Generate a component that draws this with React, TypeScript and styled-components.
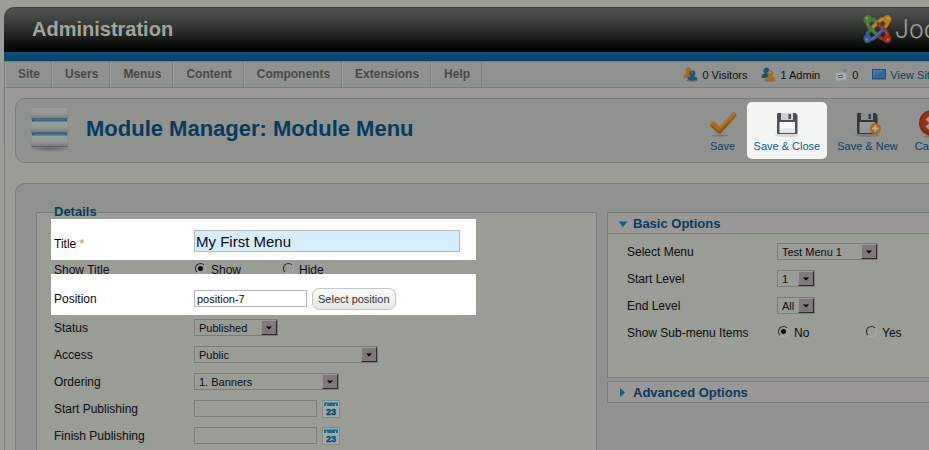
import React from "react";
import styled, { createGlobalStyle, css } from "styled-components";

const c = {
  page: "#9a9c96",
  card: "#90928f",
  strip: "#999896",
  line: "#7a7c7a",
  link: "#073f68",
  heading: "#053b5f",
  text: "#0b0b0d",
};

const GlobalStyle = createGlobalStyle`
  *, *::before, *::after { box-sizing: border-box; }
  body {
    margin: 0;
    background: ${c.page};
    color: ${c.text};
    font-family: "Liberation Sans", Arial, sans-serif;
    font-size: 12px;
    line-height: 14px;
  }
  button, input, select { font-family: inherit; color: inherit; margin: 0; }
`;

const Shell = styled.div`
  height: 100vh;
  overflow: hidden;
  padding: 7px 0 0 4px;
`;

const Page = styled.div`
  margin-right: -84px;
`;

const Banner = styled.header`
  display: flex;
  align-items: center;
  justify-content: space-between;
  height: 45px;
  padding: 0 26px 2px 28px;
  border-top: 1px solid #3c3e3c;
  border-radius: 10px 10px 0 0;
  background: linear-gradient(#515451, #363836 40%, #050705 92%);
`;

const SiteName = styled.h1`
  margin: 0;
  font-size: 20px;
  line-height: 24px;
  color: #a2a49f;
`;

const Brand = styled.a`
  display: flex;
  align-items: center;
  gap: 3px;
  width: 124px;
  color: #9b9d9a;
  font: 300 25px/30px Inter, sans-serif;
  text-decoration: none;
`;

const BlueBar = styled.div`
  height: 9px;
  background: linear-gradient(#175277, #064a73 40%, #04456c);
`;

const MenuBar = styled.div`
  display: flex;
  justify-content: space-between;
  height: 27px;
  padding-right: 77px;
  border: 1px solid ${c.line};
  border-width: 1px 0 1px 1px;
  background: ${c.card};
`;

const MainNav = styled.nav`
  display: flex;
`;

const NavLink = styled.a`
  padding: 0 11px 0 12px;
  border-left: 1px solid #9b9d9a;
  border-right: 1px solid #7e807e;
  color: #474947;
  font-weight: bold;
  line-height: 25px;
  text-decoration: none;
`;

const StatusList = styled.div`
  display: flex;
  align-items: center;
  gap: 14px;
  font-size: 11px;
`;

const StatusItem = styled.span`
  display: flex;
  align-items: center;
  gap: 4px;
  svg { flex: none; }
`;

const StatusLink = styled.a`
  color: ${c.link};
  text-decoration: none;
`;

const Body = styled.main`
  padding: 10px;
  border-left: 1px solid ${c.line};
  border-right: 1px solid ${c.line};
  background: linear-gradient(${c.strip}, ${c.page} 70px);
`;

const Card = styled.section`
  border: 1px solid ${c.line};
  border-radius: 10px;
  background: ${c.card};
`;

const TitleCard = styled(Card)`
  display: flex;
  align-items: center;
  height: 65px;
  padding: 0 45px 0 12px;
  margin-bottom: 20px;
`;

const PageTitle = styled.h2`
  flex: 1;
  margin: 0 0 4px 14px;
  color: ${c.heading};
  font-size: 22px;
  line-height: 26px;
`;

const Toolbar = styled.div`
  display: flex;
  gap: 3px;
`;

const ToolButton = styled.button<{ $lit?: boolean }>`
  display: flex;
  flex-direction: column;
  align-items: center;
  justify-content: space-between;
  height: 57px;
  padding: 8px 7px 6px;
  border: 0;
  border-radius: 5px;
  background: ${(p) => (p.$lit ? "#f3f5f2" : "transparent")};
  color: ${(p) => (p.$lit ? "#0d5a96" : c.link)};
  font-size: 11px;
  line-height: 14px;
  white-space: nowrap;
`;

const ContentCard = styled(Card)`
  display: grid;
  grid-template-columns: 3fr 2fr;
  gap: 10px;
  padding: 21px 20px 40px;
`;

const Details = styled.fieldset`
  min-width: 0;
  margin: 0;
  padding: 0 0 40px 14px;
  border: 1px solid ${c.line};
  background: ${c.page};
`;

const Legend = styled.legend`
  margin-left: 3px;
  padding: 0;
  color: ${c.heading};
  font-size: 13px;
  font-weight: bold;
  line-height: 14px;
`;

const Row = styled.div<{ $kind?: "title" | "slim" | "position"; $labelWidth?: number }>`
  display: grid;
  grid-template-columns: ${(p) => p.$labelWidth ?? 140}px 1fr;
  align-items: center;
  height: 27px;
  padding: 0 0 2px 3px;
  ${(p) => p.$kind === "slim" && css`
    height: 14px;
    padding: 3px 0 0 3px;
    align-items: start;
    overflow: hidden;
  `}
  ${(p) => (p.$kind === "title" || p.$kind === "position") && css`
    height: 41px;
    max-width: 425px;
    padding: ${p.$kind === "title" ? 3 : 8}px 0 0 3px;
    background: #fff;
  `}
  ${(p) => p.$kind === "title" && css`
    label { padding-top: 5px; }
  `}
`;

const OptionRow = styled(Row)`
  padding-left: 0;
`;

const Controls = styled.div`
  display: flex;
  align-items: center;
  gap: 5px;
`;

const Required = styled.span`
  color: #d08a35;
`;

const TextInput = styled.input<{ $look?: "title" | "lit" }>`
  width: 123px;
  height: 17px;
  padding: 0 2px;
  border: 1px solid ${c.line};
  border-radius: 0;
  background: transparent;
  font-size: 11px;
  ${(p) => p.$look === "lit" && css`
    width: 113px;
    border-color: #b8b8b8;
    background: #fff;
  `}
  ${(p) => p.$look === "title" && css`
    width: 266px;
    height: 22px;
    padding: 0 1px;
    border-color: #b8b8b8;
    background: #d6edff;
    font-size: 15px;
  `}
`;

const PillButton = styled.button`
  height: 22px;
  padding: 0 5px;
  border: 1px solid #c4c6c4;
  border-radius: 7px;
  background: linear-gradient(#fafbfa, #f1f3f1 50%, #e3e6e4);
  color: #2f3436;
  font-size: 11px;
  white-space: nowrap;
`;

const SelectBox = styled.span<{ $width: number }>`
  display: grid;
  grid-template-columns: 1fr 16px;
  width: ${(p) => p.$width}px;
  height: 17px;
  border: 1px solid ${c.line};
`;

const NativeSelect = styled.select`
  grid-area: 1 / 1 / 2 / 3;
  appearance: none;
  width: 100%;
  padding: 0 16px 0 4px;
  border: 0;
  background: transparent;
  font-size: 11px;
`;

const SelectArrow = styled.span`
  grid-area: 1 / 2 / 2 / 3;
  display: flex;
  align-items: center;
  justify-content: center;
  border: 1px solid;
  border-color: #9b9595 #2c2a2a #2c2a2a #9b9595;
  background: #7f7979;
  pointer-events: none;
`;

const RadioLabel = styled.label`
  display: flex;
  align-items: center;
  gap: 5px;
  width: 83px;
  padding-left: 1px;
`;

const Radio = styled.input`
  appearance: none;
  width: 11px;
  height: 11px;
  margin-bottom: 3px;
  border: 1px solid;
  border-color: #2b2b2b #a9aba6 #a9aba6 #2b2b2b;
  border-radius: 50%;
  &:checked { background: radial-gradient(circle, #000 2px, transparent 3px); }
`;

const CalendarButton = styled.button`
  display: flex;
  width: 18px;
  height: 18px;
  padding: 0;
  border: 1px solid #858885;
  background: #a3a8a8;
`;

const Panels = styled.div`
  display: flex;
  flex-direction: column;
  gap: 3px;
  min-width: 0;
  padding-top: 7px;
`;

const Panel = styled.section`
  border: 1px solid ${c.line};
  background: ${c.page};
`;

const PanelToggle = styled.button`
  display: flex;
  align-items: center;
  gap: 5px;
  width: 100%;
  height: 20px;
  padding: 2px 10px 0;
  border: 0;
  background: ${c.strip};
  color: ${c.heading};
  font-size: 13px;
  font-weight: bold;
  line-height: 16px;
`;

const PanelBody = styled.div`
  padding: 5px 19px 30px;
  border-top: 1px solid ${c.line};
`;

function JoomlaMark() {
  const arms = [
    ["#4c7b2d", 0],
    ["#b77a19", 90],
    ["#9e2c24", 180],
    ["#365c92", 270],
  ] as const;
  return (
    <svg width="30" height="30" viewBox="0 0 30 30" aria-hidden="true">
      {arms.map(([color, turn]) => (
        <g key={color} transform={`rotate(${turn} 15 15)`} fill="none" stroke={color} strokeWidth="3.800" strokeLinecap="round">
          <path d="M4.500 5Q3.500 11 8 14.500L14 20.500" />
          <path d="M5 4.500Q10 3.500 13 7" />
          <circle cx="4.700" cy="4.700" r="2.300" fill={color} />
          <path d="M4.500 9Q6 12 9 14.500L13 18.500" stroke="#fff" strokeOpacity=".22" strokeWidth="1" />
          <circle cx="4" cy="3.800" r="1.200" fill="#fff" fillOpacity=".35" stroke="none" />
        </g>
      ))}
      <path d="M6 12.500L8 14.500L12 18.500" fill="none" stroke="#4c7b2d" strokeWidth="3.600" />
    </svg>
  );
}

function ModuleIcon() {
  return (
    <svg width="44" height="48" viewBox="0 0 44 48" aria-hidden="true">
      <defs>
        <linearGradient id="slab" x2="0" y2="1">
          <stop offset="0" stopColor="#9b9d9d" />
          <stop offset=".5" stopColor="#969999" />
          <stop offset="1" stopColor="#70777b" />
        </linearGradient>
        <radialGradient id="slabShadow">
          <stop offset="0" stopColor="#626566" />
          <stop offset="1" stopColor="#626566" stopOpacity="0" />
        </radialGradient>
      </defs>
      <ellipse cx="22" cy="41" rx="22" ry="4" fill="url(#slabShadow)" />
      <rect x="4" y="2" width="35" height="36" fill="#0b6089" />
      <path d="M6 13h31M6 27.500h31" stroke="#3286a8" />
      {[0, 14, 28].map((y) => (
        <g key={y}>
          <rect x="3" y={y + 0.5} width="37" height="11.500" rx="1" fill="url(#slab)" stroke="#7d8285" strokeWidth=".5" />
          <path d={`M3.500 ${y + 11.5}h36`} stroke="#5b6064" />
        </g>
      ))}
    </svg>
  );
}

function UsersIcon({ front, back }: { front: string; back: string }) {
  return (
    <svg width="15" height="15" viewBox="0 0 15 15" aria-hidden="true">
      <ellipse cx="9" cy="13.500" rx="6" ry="1.200" fill="#6d6f6c" />
      <path d="M0.500 10Q0.500 7 3.500 6.500Q2 5 2.500 3Q3.300 .6 5.600 .6Q8.300 .8 8.400 3.200Q8.400 5.200 7.200 6.500Q9.500 7.500 9.500 11H1Z" fill={back} />
      <path d="M4.500 12.500Q4 10 7.500 9.300Q6 7.500 6.300 5.600Q7 3.400 9.400 3.400Q12.200 3.500 12.400 6Q12.300 8 11 9.300Q14.500 10 14.500 12.500Q9.500 14.800 4.500 12.500Z" fill={front} />
      <circle cx="9" cy="5.500" r="1" fill="#fff" fillOpacity=".25" />
    </svg>
  );
}

function MailIcon() {
  return (
    <svg width="14" height="14" viewBox="0 0 14 14" aria-hidden="true">
      <path d="M1 5L9 4L12.500 6V12L2 13Z" fill="#a9adad" stroke="#8f9495" strokeWidth=".6" />
      <ellipse cx="6.500" cy="8.500" rx="2.500" ry="1.200" fill="none" stroke="#315d75" />
      <path d="M9 2.500L12 1V4Z" fill="#8ba4ae" stroke="#37718f" strokeWidth=".7" />
    </svg>
  );
}

function ScreenIcon() {
  return (
    <svg width="14" height="11" viewBox="0 0 14 11" aria-hidden="true">
      <rect x=".5" y=".5" width="13" height="9" fill="#2f68a3" stroke="#234e7b" />
      <path d="M1 1H13L1 7Z" fill="#4577ab" />
      <path d="M0 10.500h14" stroke="#6e716e" />
    </svg>
  );
}

function CheckIcon() {
  return (
    <svg width="28" height="28" viewBox="0 0 28 28" aria-hidden="true">
      <ellipse cx="11" cy="25.500" rx="8" ry="1" fill="#737572" />
      <path d="M.8 14L4.500 10.500L10.500 16L23.500 2.500H26.500L27.500 5L11.500 23.500H9.500L1 15.500Z" fill="#a96b17" />
      <path d="M1 14.500L10.500 21L27.300 4.500V6L11.500 23.800H9.500L1 16Z" fill="#8c5413" />
      <path d="M1.500 13L5 11L10.500 17L24 3.500" fill="none" stroke="#b9812d" strokeWidth="1" />
    </svg>
  );
}

function FloppyIcon({ dim, plus }: { dim?: boolean; plus?: boolean }) {
  const paper = dim ? "#999b9a" : "#f8f9f9";
  const metal = dim ? "#8b8f90" : "#cdd1d4";
  const body = dim ? "#34383b" : "#4c5156";
  return (
    <svg width="28" height="28" viewBox="0 0 28 28" aria-hidden="true">
      <ellipse cx="14" cy="25" rx="12" ry="2" fill={dim ? "#7c7e7b" : "#d8dad7"} />
      <path d="M4 4Q4 3 5 3H22.500L24.500 5V23Q24.500 24 23.500 24H5Q4 24 4 23Z" fill={body} />
      <rect x="8" y="3" width="12" height="7" fill={metal} />
      <rect x="15.500" y="4" width="2.500" height="5" fill={body} />
      <rect x="6.500" y="12" width="15.500" height="11" fill={paper} />
      <path d="M7 18.500h14.500V23H7Z" fill={metal} fillOpacity=".5" />
      {plus && (
        <g>
          <circle cx="22.300" cy="18.500" r="5.600" fill="#ae6a14" />
          <path d="M22.300 15.200v6.600M19 18.500h6.600" stroke="#b3aca1" strokeWidth="2" />
        </g>
      )}
    </svg>
  );
}

function CancelIcon() {
  return (
    <svg width="28" height="28" viewBox="0 0 28 28" aria-hidden="true">
      <ellipse cx="14" cy="26.500" rx="9" ry="1.300" fill="#757774" />
      <circle cx="14" cy="13" r="13" fill="#8a2410" />
      <circle cx="14" cy="12" r="11" fill="#982d16" />
      <path d="M9 8L19 18M19 8L9 18" stroke="#a09b98" strokeWidth="4" />
    </svg>
  );
}

function CalendarIcon() {
  return (
    <svg width="16" height="16" viewBox="0 0 16 16" aria-hidden="true">
      <rect x="1" y="1" width="14" height="4" fill="#176b91" />
      <path d="M1 1.500h14" stroke="#4c93ae" />
      <path d="M3.500 3v2M12.500 3v2" stroke="#8fb0bb" />
      <text x="8" y="14" textAnchor="middle" fontFamily="Liberation Sans, Arial, sans-serif" fontSize="9" fontWeight="bold" fill="#084a70" stroke="#084a70" strokeWidth=".4">23</text>
    </svg>
  );
}

function Triangle({ open }: { open?: boolean }) {
  return (
    <svg width="10" height="10" viewBox="0 0 10 10" aria-hidden="true">
      <path d={open ? "M.5 2.500h9L5 8Z" : "M2 0L7 4.500L2 9Z"} fill="#1c5c7e" />
    </svg>
  );
}

function Select({ id, value, width }: { id: string; value: string; width: number }) {
  return (
    <SelectBox $width={width}>
      <NativeSelect id={id} defaultValue={value}>
        <option>{value}</option>
      </NativeSelect>
      <SelectArrow>
        <svg width="6" height="4" viewBox="0 0 6 4" aria-hidden="true">
          <path d="M0 .5h6L3 3.500Z" fill="#000" />
        </svg>
      </SelectArrow>
    </SelectBox>
  );
}

function RadioPair({ name, options, labelledBy }: { name: string; options: [string, string]; labelledBy: string }) {
  return (
    <Controls role="radiogroup" aria-labelledby={labelledBy}>
      {options.map((option, i) => (
        <RadioLabel key={option}>
          <Radio type="radio" name={name} defaultChecked={i === 0} />
          {option}
        </RadioLabel>
      ))}
    </Controls>
  );
}

function DateRow({ id, label }: { id: string; label: string }) {
  return (
    <Row>
      <label htmlFor={id}>{label}</label>
      <Controls>
        <TextInput id={id} />
        <CalendarButton type="button" aria-label={`${label} calendar`}>
          <CalendarIcon />
        </CalendarButton>
      </Controls>
    </Row>
  );
}

const menus = ["Site", "Users", "Menus", "Content", "Components", "Extensions", "Help"];

const detailSelects = [
  { id: "status", label: "Status", value: "Published", width: 84 },
  { id: "access", label: "Access", value: "Public", width: 184 },
  { id: "ordering", label: "Ordering", value: "1. Banners", width: 145 },
];

const optionSelects = [
  { id: "menu", label: "Select Menu", value: "Test Menu 1", width: 101 },
  { id: "start-level", label: "Start Level", value: "1", width: 38 },
  { id: "end-level", label: "End Level", value: "All", width: 38 },
];

export default function App() {
  return (
    <Shell>
      <GlobalStyle />
      <Page>
        <Banner>
          <SiteName>Administration</SiteName>
          <Brand href="#">
            <JoomlaMark />
            Joomla!
          </Brand>
        </Banner>
        <BlueBar />
        <MenuBar>
          <MainNav>
            {menus.map((m) => (
              <NavLink key={m} href="#">{m}</NavLink>
            ))}
          </MainNav>
          <StatusList>
            <StatusItem><UsersIcon back="#a86b1d" front="#175476" />0 Visitors</StatusItem>
            <StatusItem><UsersIcon back="#175476" front="#a86b1d" />1 Admin</StatusItem>
            <StatusItem><MailIcon />0</StatusItem>
            <StatusItem><ScreenIcon /><StatusLink href="#">View Site</StatusLink></StatusItem>
          </StatusList>
        </MenuBar>
        <Body>
          <TitleCard>
            <ModuleIcon />
            <PageTitle>Module Manager: Module Menu</PageTitle>
            <Toolbar>
              <ToolButton type="button"><CheckIcon />Save</ToolButton>
              <ToolButton type="button" $lit><FloppyIcon />Save &amp; Close</ToolButton>
              <ToolButton type="button"><FloppyIcon dim plus />Save &amp; New</ToolButton>
              <ToolButton type="button"><CancelIcon />Cancel</ToolButton>
            </Toolbar>
          </TitleCard>
          <ContentCard>
            <Details>
              <Legend>Details</Legend>
              <Row $kind="title">
                <label htmlFor="title">Title <Required>*</Required></label>
                <TextInput id="title" $look="title" defaultValue="My First Menu" />
              </Row>
              <Row $kind="slim">
                <span id="show-title">Show Title</span>
                <RadioPair name="show-title" options={["Show", "Hide"]} labelledBy="show-title" />
              </Row>
              <Row $kind="position">
                <label htmlFor="position">Position</label>
                <Controls>
                  <TextInput id="position" $look="lit" defaultValue="position-7" />
                  <PillButton type="button">Select position</PillButton>
                </Controls>
              </Row>
              {detailSelects.map((s) => (
                <Row key={s.id}>
                  <label htmlFor={s.id}>{s.label}</label>
                  <Select id={s.id} value={s.value} width={s.width} />
                </Row>
              ))}
              <DateRow id="start" label="Start Publishing" />
              <DateRow id="finish" label="Finish Publishing" />
            </Details>
            <Panels>
              <Panel>
                <PanelToggle type="button" aria-expanded="true"><Triangle open />Basic Options</PanelToggle>
                <PanelBody>
                  {optionSelects.map((s) => (
                    <OptionRow key={s.id} $labelWidth={150}>
                      <label htmlFor={s.id}>{s.label}</label>
                      <Select id={s.id} value={s.value} width={s.width} />
                    </OptionRow>
                  ))}
                  <OptionRow $labelWidth={150}>
                    <span id="sub-items">Show Sub-menu Items</span>
                    <RadioPair name="sub-items" options={["No", "Yes"]} labelledBy="sub-items" />
                  </OptionRow>
                </PanelBody>
              </Panel>
              <Panel>
                <PanelToggle type="button" aria-expanded="false"><Triangle />Advanced Options</PanelToggle>
              </Panel>
            </Panels>
          </ContentCard>
        </Body>
      </Page>
    </Shell>
  );
}
